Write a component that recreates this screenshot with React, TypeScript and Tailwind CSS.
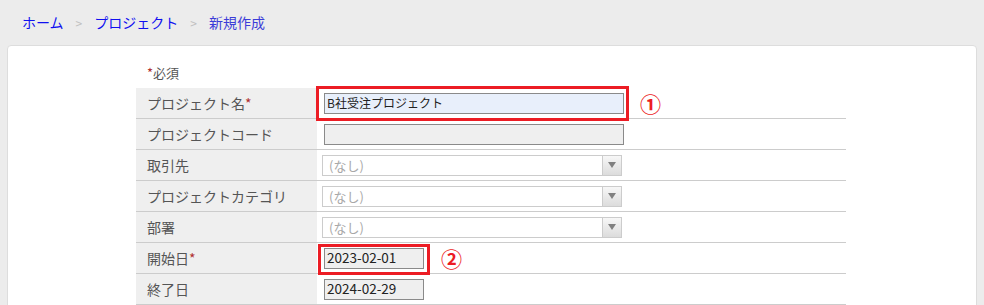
import React from "react";

const font = { fontFamily: '"Noto Sans CJK JP", "Noto Sans", sans-serif' };

type Row = { label: string; required?: boolean; kind: "text" | "select" | "date"; value?: string; mark?: string; highlight?: boolean; blue?: boolean };

const rows: Row[] = [
  { label: "プロジェクト名", required: true, kind: "text", value: "B社受注プロジェクト", mark: "①", highlight: true, blue: true },
  { label: "プロジェクトコード", kind: "text", value: "" },
  { label: "取引先", kind: "select" },
  { label: "プロジェクトカテゴリ", kind: "select" },
  { label: "部署", kind: "select" },
  { label: "開始日", required: true, kind: "date", value: "2023-02-01", mark: "②", highlight: true },
  { label: "終了日", kind: "date", value: "2024-02-29" },
];

function Field({ row }: { row: Row }) {
  if (row.kind === "select") {
    return (
      <div className="ml-[5px] flex h-[21px] w-[300px] items-center border border-[#cccccc] bg-white">
        <span className="flex-1 pl-[6px] text-[13px] leading-none text-[#a8a8a8]">(なし)</span>
        <span className="flex h-full w-[19px] items-center justify-center border-l border-[#cccccc] bg-gradient-to-b from-[#f7f7f7] to-[#dcdcdc]">
          <span className="h-0 w-0 border-x-[4px] border-t-[6px] border-x-transparent border-t-[#808080]" />
        </span>
      </div>
    );
  }
  const wide = row.kind === "text";
  const box = (
    <div className={`relative ml-[7px] flex h-[21px] items-center border border-[#8a8a8a] px-[2px] leading-none text-[#222] ${wide ? "w-[300px] text-[12px]" : "w-[100px] text-[13.5px]"} ${row.blue ? "bg-[#e8effb]" : "bg-[#efefef]"}`}>
      {row.value}
      {row.highlight && (
        <span className={`pointer-events-none absolute border-[3px] border-[#ec1c24] ${wide ? "-left-[9px] -right-[6px] -top-[8px] -bottom-[8px]" : "-left-[7px] -right-[7px] -top-[5px] -bottom-[7px]"}`} />
      )}
    </div>
  );
  return (
    <div className="flex items-center">
      {box}
      {row.mark && <span className={`text-[21px] font-semibold leading-none text-[#ec1c24] ${wide ? "ml-[16px]" : "ml-[17px]"}`}>{row.mark}</span>}
    </div>
  );
}

export default function App() {
  return (
    <div className="min-h-[305px] w-[984px] overflow-hidden bg-[#ececec]" style={font}>
      <nav className="flex h-[45px] items-center pl-[22px] text-[14px]">
        <span className="text-[#1010f0]">ホーム</span>
        <span className="mx-[12px] text-[12px] text-[#c0c0c0]">&gt;</span>
        <span className="text-[#1010f0]">プロジェクト</span>
        <span className="mx-[12px] text-[12px] text-[#c0c0c0]">&gt;</span>
        <span className="text-[#3c3cd8]">新規作成</span>
      </nav>
      <div className="ml-[7px] h-[270px] w-[970px] rounded-t-[4px] border border-[#dddddd] bg-white pl-[128px] pt-[17px]">
        <div className="h-[25px] pl-[11px] text-[13px] leading-[20px] text-[#555]">
          <span className="text-[#b03030]">*</span>必須
        </div>
        <div className="grid w-[710px] grid-cols-[181px_529px]">
          {rows.map((row) => (
            <React.Fragment key={row.label}>
              <div className="flex h-[31px] items-center border-b border-[#cccccc] bg-[#efefef] pl-[11px] text-[14px] text-[#555]">
                {row.label}
                {row.required && <span className="text-[#b03030]">*</span>}
              </div>
              <div className="flex h-[31px] items-center border-b border-[#cccccc] bg-white">
                <Field row={row} />
              </div>
            </React.Fragment>
          ))}
        </div>
      </div>
    </div>
  );
}
